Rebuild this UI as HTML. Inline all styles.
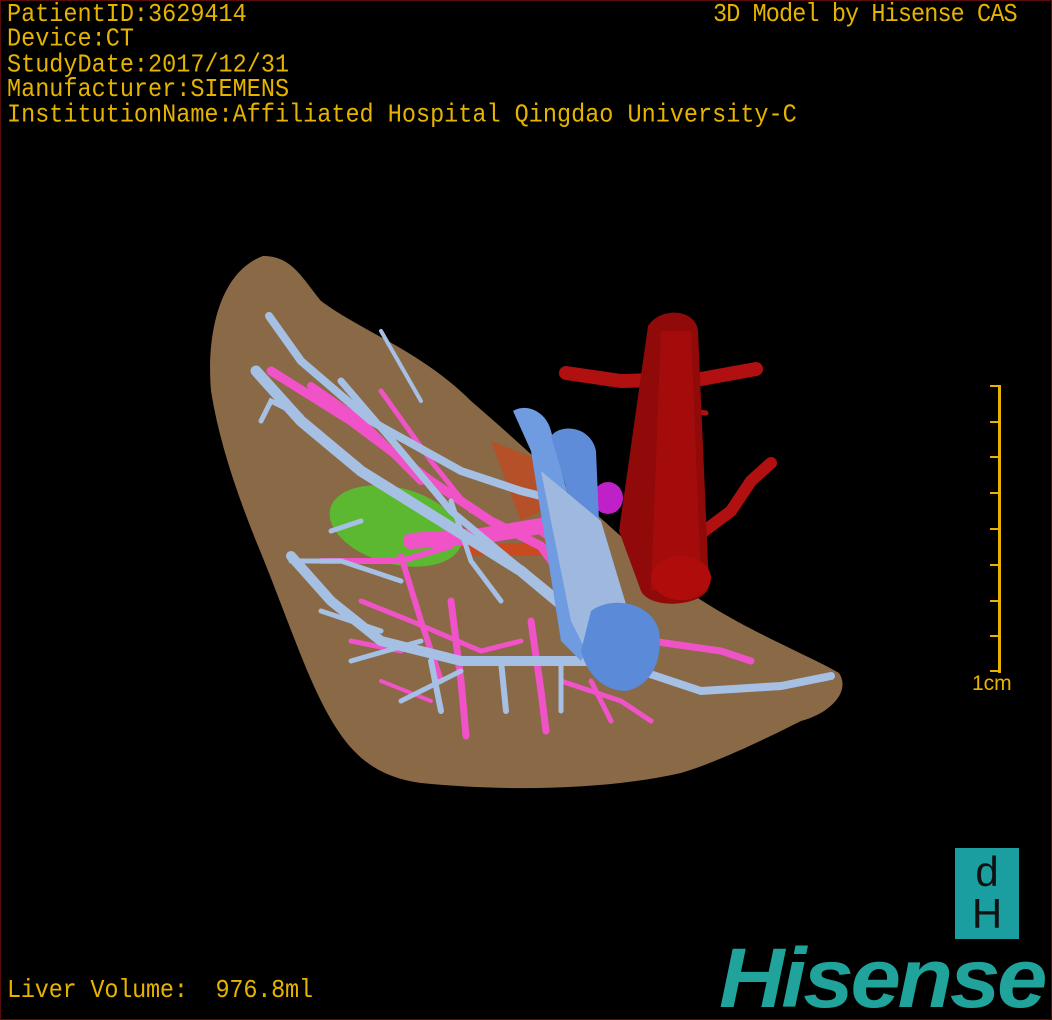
<!DOCTYPE html>
<html><head><meta charset="utf-8"><style>
html,body{margin:0;padding:0;background:#000;}
#w{position:relative;width:1052px;height:1020px;overflow:hidden;background:#000;box-sizing:border-box;border:1px solid #5a0c0c;}
.t{position:absolute;color:#e6b400;font-family:"Liberation Mono",monospace;font-size:23.5px;line-height:22.4px;white-space:pre;transform:scaleY(1.12);transform-origin:0 0;}
</style></head><body><div id="w">
<svg width="1052" height="1020" style="position:absolute;left:0;top:0">
<path d="M262,255 C290,255 300,275 320,300 C360,330 420,350 470,400 C540,460 600,520 660,570 C720,620 800,650 838,672 C850,690 830,712 800,720 C770,735 720,760 680,772 C600,790 500,790 420,782 C370,775 345,750 320,700 C300,660 280,600 255,540 C235,490 218,440 210,390 C205,330 220,270 262,255 Z" fill="#8a6946"/>
<ellipse cx="395" cy="525" rx="68" ry="38" fill="#5cb830" transform="rotate(15 395 525)"/>
<path d="M490,440 L540,460 L560,500 L520,520 Z" fill="#c04a20" opacity="0.8"/>
<path d="M460,545 L560,540 L560,555 L470,555 Z" fill="#c84a1e"/>
<g stroke="#b01010" fill="none" stroke-linecap="round">
<path d="M565,372 L620,380 L700,378 L755,368" stroke-width="14"/>
<path d="M690,540 L730,510 L750,480 L770,462" stroke-width="12"/>
<path d="M690,410 L705,412" stroke-width="5"/>
</g>
<ellipse cx="607" cy="497" rx="15" ry="16" fill="#c020c8"/>
<path d="M647,325 C660,305 695,308 697,330 L708,585 C705,605 650,610 640,590 L618,530 Z" fill="#900a0a"/>
<path d="M660,330 L690,330 L700,580 L650,590 Z" fill="#a40c0c"/>
<ellipse cx="680" cy="577" rx="30" ry="22" fill="#b00c0c"/>
<g stroke="#f052c8" fill="none" stroke-linecap="round">
<path d="M270,370 L350,420 L430,480 L490,520 L540,545 L580,600 L600,640" stroke-width="9"/>
<path d="M310,385 L360,420 L420,480" stroke-width="8"/>
<path d="M380,390 L430,460 L470,510" stroke-width="5"/>
<path d="M410,540 L480,535 L540,525 L560,540" stroke-width="16"/>
<path d="M320,560 L400,560 L450,545" stroke-width="6"/>
<path d="M400,555 L420,620 L440,680" stroke-width="6"/>
<path d="M450,600 L460,680 L465,735" stroke-width="7"/>
<path d="M530,620 L540,690 L545,730" stroke-width="7"/>
<path d="M590,680 L610,720" stroke-width="5"/>
<path d="M650,640 L720,650 L750,660" stroke-width="7"/>
<path d="M360,600 L410,620 L480,650 L520,640" stroke-width="5"/>
<path d="M350,640 L400,650" stroke-width="5"/>
<path d="M380,680 L430,700" stroke-width="4"/>
<path d="M560,680 L620,700 L650,720" stroke-width="5"/>
</g>
<g stroke="#a6c0e4" fill="none" stroke-linecap="round">
<path d="M268,315 L300,360 L370,420 L460,470 L520,490 L560,500" stroke-width="8"/>
<path d="M255,370 L300,420 L360,470 L440,520 L520,570 L580,620" stroke-width="11"/>
<path d="M340,380 L400,450 L450,510 L510,560 L560,600" stroke-width="7"/>
<path d="M290,555 L330,600 L380,640 L460,660 L540,660 L600,660" stroke-width="10"/>
<path d="M290,560 L340,560 L400,580" stroke-width="5"/>
<path d="M320,610 L380,630" stroke-width="5"/>
<path d="M350,660 L420,640" stroke-width="5"/>
<path d="M400,700 L460,670" stroke-width="5"/>
<path d="M430,660 L440,710" stroke-width="6"/>
<path d="M500,660 L505,710" stroke-width="6"/>
<path d="M560,660 L560,710" stroke-width="5"/>
<path d="M640,670 L700,690 L780,685 L830,675" stroke-width="8"/>
<path d="M260,420 L270,400 L300,415" stroke-width="5"/>
<path d="M360,520 L330,530" stroke-width="5"/>
<path d="M450,500 L470,560 L500,600" stroke-width="5"/>
<path d="M380,330 L420,400" stroke-width="4"/>
</g>
<path d="M512,410 C525,402 545,410 550,430 L600,620 L580,660 L560,640 L530,450 Z" fill="#6f9be0"/>
<path d="M550,435 C560,422 590,425 595,450 L598,520 L575,520 Z" fill="#5f8cd8"/>
<path d="M540,470 L600,520 L630,620 L590,660 L570,620 Z" fill="#9fb8e0"/>
<path d="M590,610 C610,595 650,600 658,630 C662,660 650,685 625,690 C600,690 585,670 580,650 Z" fill="#5a8ad8"/>
</svg>
<div class="t" style="left:6px;top:2px">PatientID:3629414
Device:CT
StudyDate:2017/12/31
Manufacturer:SIEMENS
InstitutionName:Affiliated Hospital Qingdao University-C</div>
<div class="t" style="left:712px;top:2px;letter-spacing:-0.9px">3D Model by Hisense CAS</div>
<div class="t" style="left:6px;top:978px;letter-spacing:-0.2px">Liver Volume:  976.8ml</div>
<div style="position:absolute;left:997px;top:384px;width:3px;height:288px;background:#e6b400"></div>
<div style="position:absolute;left:989px;top:384px;width:10px;height:2px;background:#e6b400"></div>
<div style="position:absolute;left:989px;top:420px;width:10px;height:2px;background:#e6b400"></div>
<div style="position:absolute;left:989px;top:455px;width:10px;height:2px;background:#e6b400"></div>
<div style="position:absolute;left:989px;top:491px;width:10px;height:2px;background:#e6b400"></div>
<div style="position:absolute;left:989px;top:527px;width:10px;height:2px;background:#e6b400"></div>
<div style="position:absolute;left:989px;top:563px;width:10px;height:2px;background:#e6b400"></div>
<div style="position:absolute;left:989px;top:599px;width:10px;height:2px;background:#e6b400"></div>
<div style="position:absolute;left:989px;top:634px;width:10px;height:2px;background:#e6b400"></div>
<div style="position:absolute;left:989px;top:669px;width:10px;height:2px;background:#e6b400"></div>
<div style="position:absolute;left:971px;top:671px;color:#e6b400;font-family:'Liberation Sans',sans-serif;font-size:21px">1cm</div>
<div style="position:absolute;left:954px;top:847px;width:64px;height:91px;background:#1a9ea0;font-family:'Liberation Sans',sans-serif;color:#111;text-align:center;">
<div style="font-size:42px;line-height:44px;margin-top:2px">d</div>
<div style="font-size:42px;line-height:40px">H</div></div>
<div style="position:absolute;left:718px;top:932px;color:#1fa39a;font-family:'Liberation Sans',sans-serif;font-weight:bold;font-style:italic;font-size:84px;letter-spacing:-3px;line-height:90px;transform:scaleX(1.08);transform-origin:0 0">Hisense</div>
</div></body></html>
